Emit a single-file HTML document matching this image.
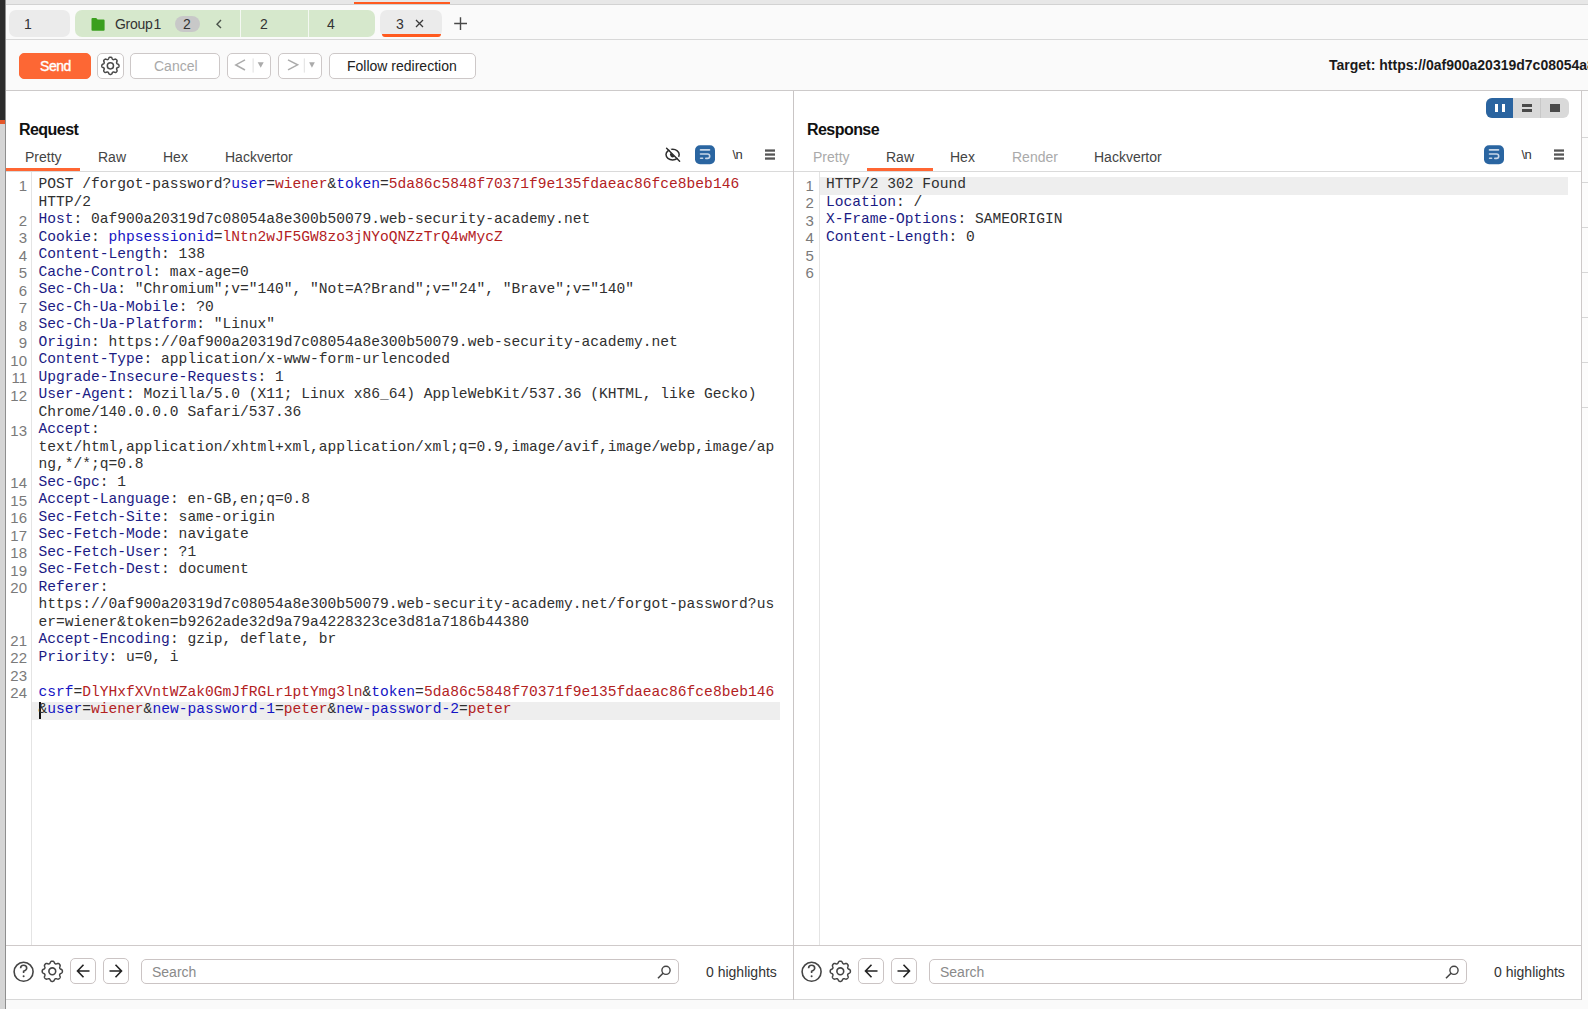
<!DOCTYPE html>
<html><head><meta charset="utf-8">
<style>
*{box-sizing:border-box;margin:0;padding:0}
html,body{width:1588px;height:1009px;overflow:hidden;background:#fafafa;font-family:"Liberation Sans",sans-serif;color:#2b2b2b}
.a{position:absolute}
svg{position:absolute;overflow:visible}
.t{position:absolute;white-space:pre;line-height:1}
/* chrome */
#topband{left:0;top:0;width:1588px;height:5px;background:#e7e7e7;border-bottom:1px solid #d2d2d2}
#toporange{left:354px;top:2px;width:96px;height:2px;background:#ff5a1f}
#tabbar{left:0;top:5px;width:1588px;height:35px;background:#fafafa;border-bottom:1px solid #d8d8d8}
#toolbar{left:0;top:40px;width:1588px;height:51px;background:#fafafa;border-bottom:1px solid #cdcaca}
#leftstrip{left:0;top:0;width:5px;height:1009px;background:#d5d5d5}
#leftdark{left:0;top:0;width:5px;height:120px;background:#2c2c2c}
#leftorange{left:0;top:120px;width:5px;height:4px;background:#e4572a}
#leftedge{left:5px;top:0;width:1px;height:1009px;background:#8e8e8e}
.tab{position:absolute;top:10px;height:27px;border-radius:7px;background:#ebebeb}
.tl{font-size:14px;color:#333;top:16.5px}
.btn{position:absolute;top:53px;height:26px;border:1px solid #cdc8c8;border-radius:5px;background:#fff}
/* panels */
.panel{position:absolute;top:91px;height:854px;background:#fff}
.ptitle{font-size:16px;font-weight:bold;color:#111;top:121.5px;letter-spacing:-0.55px}
.ptab{font-size:14px;color:#444;top:150px}
.ptab.dis{color:#aaa}
.mono{position:absolute;font-family:"Liberation Mono",monospace;font-size:14.6px;line-height:17.5px;white-space:pre;color:#303030}
.hn{color:#1b1b84}
.pn{color:#1414c4}
.pv{color:#b3221f}
.ln{position:absolute;font-family:"Liberation Sans",sans-serif;font-size:15px;line-height:17.5px;white-space:pre;color:#7a7a7a;text-align:right}
.foot{position:absolute;top:945px;height:55px;background:#fff}
.search{position:absolute;top:959px;height:25px;border:1px solid #cfcaca;border-radius:5px;background:#fff}
.stext{font-size:14px;color:#8a8a8a;top:965px}
.hl{font-size:14px;color:#333;top:965px}
</style></head><body>
<div class="a" id="topband"></div>
<div class="a" id="toporange"></div>
<div class="a" id="tabbar"></div>
<div class="a" id="toolbar"></div>

<!-- tabs -->
<div class="tab" style="left:9px;width:61px"></div>
<div class="t tl" style="left:24px">1</div>
<div class="tab" style="left:75px;width:300px;background:#d6e8cc"></div>
<div class="a" style="left:240px;top:10px;width:1px;height:27px;background:#f4f8f2"></div>
<div class="a" style="left:308px;top:10px;width:1px;height:27px;background:#f4f8f2"></div>
<svg style="left:91px;top:18px" width="14" height="13" viewBox="0 0 14 13"><path d="M0.5 1 Q0.5 0 1.5 0 H5.2 L6.6 1.6 H12.6 Q13.6 1.6 13.6 2.6 V12 Q13.6 12.8 12.6 12.8 H1.5 Q0.5 12.8 0.5 12 Z" fill="#3a9f1e"/></svg>
<div class="t tl" style="left:115px;letter-spacing:-0.3px">Group<span style="margin-left:1px">1</span></div>
<div class="a" style="left:175px;top:16px;width:25px;height:16px;border-radius:8px;background:#c8c8c8"></div>
<div class="t tl" style="left:183px">2</div>
<svg style="left:215px;top:19px" width="8" height="10" viewBox="0 0 8 10"><path d="M6 1 L2 5.2 L6 9" fill="none" stroke="#4a524a" stroke-width="1.4"/></svg>
<div class="t tl" style="left:260px">2</div>
<div class="t tl" style="left:327px">4</div>
<div class="tab" style="left:380px;width:62px"></div>
<div class="a" style="left:382px;top:34px;width:59px;height:3px;background:#ff5a1f;border-radius:0 0 3px 3px"></div>
<div class="t tl" style="left:396px">3</div>
<svg style="left:415px;top:19px" width="9" height="9" viewBox="0 0 9 9"><path d="M1 1 L8 8 M8 1 L1 8" stroke="#3a3a3a" stroke-width="1.3"/></svg>
<svg style="left:454px;top:17px" width="14" height="14" viewBox="0 0 14 14"><path d="M6.5 0.3 V13 M0.2 6.5 H13" stroke="#484848" stroke-width="1.4"/></svg>

<!-- toolbar -->
<div class="btn" style="left:19px;width:72px;background:#fd6734;border-color:#fd6734"></div>
<div class="t" style="left:40px;top:58.5px;font-size:14px;color:#fff;letter-spacing:-0.45px;-webkit-text-stroke:0.35px #fff">Send</div>
<div class="btn" style="left:97px;width:27px"></div>
<svg style="left:97px;top:53px" width="27" height="26" viewBox="0 0 27 26"><path d="M13.40 4.20 L13.74 4.22 L14.07 4.28 L14.39 4.40 L14.69 4.63 L14.95 5.01 L15.15 5.49 L15.34 5.91 L15.54 6.21 L15.76 6.40 L16.00 6.53 L16.26 6.61 L16.55 6.63 L16.90 6.56 L17.33 6.39 L17.81 6.20 L18.26 6.11 L18.64 6.16 L18.95 6.30 L19.23 6.49 L19.48 6.72 L19.71 6.97 L19.90 7.25 L20.04 7.56 L20.09 7.94 L20.00 8.39 L19.81 8.87 L19.64 9.30 L19.57 9.65 L19.59 9.94 L19.67 10.20 L19.80 10.44 L19.99 10.66 L20.29 10.86 L20.71 11.05 L21.19 11.25 L21.57 11.51 L21.80 11.81 L21.92 12.13 L21.98 12.46 L22.00 12.80 L21.98 13.14 L21.92 13.47 L21.80 13.79 L21.57 14.09 L21.19 14.35 L20.71 14.55 L20.29 14.74 L19.99 14.94 L19.80 15.16 L19.67 15.40 L19.59 15.66 L19.57 15.95 L19.64 16.30 L19.81 16.73 L20.00 17.21 L20.09 17.66 L20.04 18.04 L19.90 18.35 L19.71 18.63 L19.48 18.88 L19.23 19.11 L18.95 19.30 L18.64 19.44 L18.26 19.49 L17.81 19.40 L17.33 19.21 L16.90 19.04 L16.55 18.97 L16.26 18.99 L16.00 19.07 L15.76 19.20 L15.54 19.39 L15.34 19.69 L15.15 20.11 L14.95 20.59 L14.69 20.97 L14.39 21.20 L14.07 21.32 L13.74 21.38 L13.40 21.40 L13.06 21.38 L12.73 21.32 L12.41 21.20 L12.11 20.97 L11.85 20.59 L11.65 20.11 L11.46 19.69 L11.26 19.39 L11.04 19.20 L10.80 19.07 L10.54 18.99 L10.25 18.97 L9.90 19.04 L9.47 19.21 L8.99 19.40 L8.54 19.49 L8.16 19.44 L7.85 19.30 L7.57 19.11 L7.32 18.88 L7.09 18.63 L6.90 18.35 L6.76 18.04 L6.71 17.66 L6.80 17.21 L6.99 16.73 L7.16 16.30 L7.23 15.95 L7.21 15.66 L7.13 15.40 L7.00 15.16 L6.81 14.94 L6.51 14.74 L6.09 14.55 L5.61 14.35 L5.23 14.09 L5.00 13.79 L4.88 13.47 L4.82 13.14 L4.80 12.80 L4.82 12.46 L4.88 12.13 L5.00 11.81 L5.23 11.51 L5.61 11.25 L6.09 11.05 L6.51 10.86 L6.81 10.66 L7.00 10.44 L7.13 10.20 L7.21 9.94 L7.23 9.65 L7.16 9.30 L6.99 8.87 L6.80 8.39 L6.71 7.94 L6.76 7.56 L6.90 7.25 L7.09 6.97 L7.32 6.72 L7.57 6.49 L7.85 6.30 L8.16 6.16 L8.54 6.11 L8.99 6.20 L9.47 6.39 L9.90 6.56 L10.25 6.63 L10.54 6.61 L10.80 6.53 L11.04 6.40 L11.26 6.21 L11.46 5.91 L11.65 5.49 L11.85 5.01 L12.11 4.63 L12.41 4.40 L12.73 4.28 L13.06 4.22Z" fill="none" stroke="#4a4a4a" stroke-width="1.5"/><circle cx="13.4" cy="12.8" r="3.1" fill="none" stroke="#4a4a4a" stroke-width="1.5"/></svg>
<div class="btn" style="left:130px;width:90px"></div>
<div class="t" style="left:154px;top:59px;font-size:14px;color:#a9a9a9">Cancel</div>
<div class="btn" style="left:227px;width:44px"></div>
<svg style="left:234px;top:58px" width="32" height="16" viewBox="0 0 32 16"><path d="M11 1.8 L1.8 6.9 L11 12" fill="none" stroke="#ababab" stroke-width="1.5"/><path d="M19.1 0.4 V14.6" stroke="#e0e0e0" stroke-width="1"/><path d="M23.7 4.3 H29.7 L26.7 9.7 Z" fill="#ababab"/></svg>
<div class="btn" style="left:278px;width:44px"></div>
<svg style="left:285px;top:58px" width="32" height="16" viewBox="0 0 32 16"><path d="M3 1.8 L12.6 6.8 L3 11.9" fill="none" stroke="#ababab" stroke-width="1.5"/><path d="M19.3 0.4 V14.6" stroke="#e0e0e0" stroke-width="1"/><path d="M24.1 4.3 H29.8 L26.95 9.7 Z" fill="#ababab"/></svg>
<div class="btn" style="left:329px;width:147px"></div>
<div class="t" style="left:347px;top:59px;font-size:14px;color:#222">Follow redirection</div>
<div class="t" style="left:1329px;top:58px;font-size:14px;color:#1a1a1a;font-weight:bold">Target: https://0af900a20319d7c08054a8e300b50079.web-security-academy.net</div>

<!-- left panel -->
<div class="panel" style="left:6px;width:787px"></div>
<div class="a" style="left:793px;top:91px;width:1px;height:909px;background:#c9c5c5"></div>
<div class="t ptitle" style="left:19px">Request</div>
<div class="t ptab" style="left:25px">Pretty</div>
<div class="t ptab" style="left:98px">Raw</div>
<div class="t ptab" style="left:163px">Hex</div>
<div class="t ptab" style="left:225px">Hackvertor</div>
<div class="a" style="left:6px;top:171px;width:787px;height:1px;background:#dadada"></div>
<div class="a" style="left:6px;top:168px;width:74px;height:3px;background:#ff6633"></div>
<div class="a" style="left:31px;top:172px;width:1px;height:773px;background:#e4e4e4"></div>
<div class="a" style="left:32px;top:702px;width:748px;height:17.5px;background:#eeeeee"></div>
<div class="a" style="left:39px;top:702px;width:2px;height:17px;background:#111"></div>
<div class="mono" style="left:38.5px;top:176.4px">POST /forgot-password?<span class="pn">user</span>=<span class="pv">wiener</span>&amp;<span class="pn">token</span>=<span class="pv">5da86c5848f70371f9e135fdaeac86fce8beb146</span>
HTTP/2
<span class="hn">Host</span>: 0af900a20319d7c08054a8e300b50079.web-security-academy.net
<span class="hn">Cookie</span>: <span class="pn">phpsessionid</span>=<span class="pv">lNtn2wJF5GW8zo3jNYoQNZzTrQ4wMycZ</span>
<span class="hn">Content-Length</span>: 138
<span class="hn">Cache-Control</span>: max-age=0
<span class="hn">Sec-Ch-Ua</span>: "Chromium";v="140", "Not=A?Brand";v="24", "Brave";v="140"
<span class="hn">Sec-Ch-Ua-Mobile</span>: ?0
<span class="hn">Sec-Ch-Ua-Platform</span>: "Linux"
<span class="hn">Origin</span>: https://0af900a20319d7c08054a8e300b50079.web-security-academy.net
<span class="hn">Content-Type</span>: application/x-www-form-urlencoded
<span class="hn">Upgrade-Insecure-Requests</span>: 1
<span class="hn">User-Agent</span>: Mozilla/5.0 (X11; Linux x86_64) AppleWebKit/537.36 (KHTML, like Gecko)
Chrome/140.0.0.0 Safari/537.36
<span class="hn">Accept</span>:
text/html,application/xhtml+xml,application/xml;q=0.9,image/avif,image/webp,image/ap
ng,*/*;q=0.8
<span class="hn">Sec-Gpc</span>: 1
<span class="hn">Accept-Language</span>: en-GB,en;q=0.8
<span class="hn">Sec-Fetch-Site</span>: same-origin
<span class="hn">Sec-Fetch-Mode</span>: navigate
<span class="hn">Sec-Fetch-User</span>: ?1
<span class="hn">Sec-Fetch-Dest</span>: document
<span class="hn">Referer</span>:
https://0af900a20319d7c08054a8e300b50079.web-security-academy.net/forgot-password?us
er=wiener&amp;token=b9262ade32d9a79a4228323ce3d81a7186b44380
<span class="hn">Accept-Encoding</span>: gzip, deflate, br
<span class="hn">Priority</span>: u=0, i

<span class="pn">csrf</span>=<span class="pv">DlYHxfXVntWZak0GmJfRGLr1ptYmg3ln</span>&amp;<span class="pn">token</span>=<span class="pv">5da86c5848f70371f9e135fdaeac86fce8beb146</span>
&amp;<span class="pn">user</span>=<span class="pv">wiener</span>&amp;<span class="pn">new-password-1</span>=<span class="pv">peter</span>&amp;<span class="pn">new-password-2</span>=<span class="pv">peter</span></div>
<div class="ln" style="left:0px;width:27px;top:176.7px">1
 
2
3
4
5
6
7
8
9
10
11
12
 
13
 
 
14
15
16
17
18
19
20
 
 
21
22
23
24
 </div>

<!-- right panel -->
<div class="panel" style="left:794px;width:787px"></div>
<div class="a" style="left:1581px;top:91px;width:2px;height:909px;background:#cdc9c9"></div>
<div class="a" style="left:1582px;top:91px;width:6px;height:909px;background:#fcfcfc"></div><div class="a" style="left:1582px;top:137px;width:6px;height:1px;background:#d6d6d6"></div><div class="a" style="left:1582px;top:182px;width:6px;height:1px;background:#d6d6d6"></div><div class="a" style="left:1582px;top:227px;width:6px;height:1px;background:#d6d6d6"></div><div class="a" style="left:1582px;top:272px;width:6px;height:1px;background:#d6d6d6"></div><div class="a" style="left:1582px;top:317px;width:6px;height:1px;background:#d6d6d6"></div><div class="a" style="left:1582px;top:362px;width:6px;height:1px;background:#d6d6d6"></div><div class="a" style="left:1582px;top:407px;width:6px;height:1px;background:#d6d6d6"></div>
<div class="t ptitle" style="left:807px">Response</div>
<div class="t ptab dis" style="left:813px">Pretty</div>
<div class="t ptab" style="left:886px">Raw</div>
<div class="t ptab" style="left:950px">Hex</div>
<div class="t ptab dis" style="left:1012px">Render</div>
<div class="t ptab" style="left:1094px">Hackvertor</div>
<div class="a" style="left:794px;top:171px;width:787px;height:1px;background:#dadada"></div>
<div class="a" style="left:867px;top:168px;width:66px;height:3px;background:#ff6633"></div>
<div class="a" style="left:819px;top:172px;width:1px;height:773px;background:#e4e4e4"></div>
<div class="a" style="left:820px;top:177px;width:748px;height:17.5px;background:#eeeeee"></div>
<div class="mono" style="left:826px;top:176.4px">HTTP/2 302 Found
<span class="hn">Location</span>: /
<span class="hn">X-Frame-Options</span>: SAMEORIGIN
<span class="hn">Content-Length</span>: 0

</div>
<div class="ln" style="left:786.8px;width:27px;top:176.7px">1
2
3
4
5
6</div>


<!-- editor icons -->
<svg style="left:655px;top:140px" width="130" height="30" viewBox="0 0 130 30"><g transform="translate(665.3,0) translate(-655,0)"><ellipse cx="7.3" cy="14.6" rx="6.6" ry="5.3" fill="none" stroke="#2e2e2e" stroke-width="1.5"/>
<path d="M5.45 12.75 A2.6 2.6 0 0 0 9.15 16.45 Z" fill="#2e2e2e"/>
<path d="M2.6 7.2 L15.6 20.2" stroke="#fff" stroke-width="1.6"/>
<path d="M1.3 8.2 L14.3 21.3" stroke="#2e2e2e" stroke-width="1.5" stroke-linecap="round"/></g><rect x="40" y="5.2" width="20" height="19" rx="5" fill="#2a65a1"/>
<path d="M45.5 9.9 H54.5" stroke="#c9d7e8" stroke-width="1.6" stroke-linecap="round"/>
<path d="M45.5 14 H52.5 A2.2 2.2 0 0 1 52.5 18.4 H50.8" fill="none" stroke="#c9d7e8" stroke-width="1.6" stroke-linecap="round"/>
<path d="M45.6 18.2 H47.6" stroke="#c9d7e8" stroke-width="1.6" stroke-linecap="round"/>
<rect x="110" y="9.4" width="10" height="2.3" fill="#555"/>
<rect x="110" y="13.4" width="10" height="2.3" fill="#555"/>
<rect x="110" y="17.4" width="10" height="2.3" fill="#555"/>
</svg><div class="t" style="left:732.5px;top:147.5px;font-size:13px;color:#333;letter-spacing:-0.5px">\n</div>
<svg style="left:1444px;top:140px" width="130" height="30" viewBox="0 0 130 30"><rect x="40" y="5.2" width="20" height="19" rx="5" fill="#2a65a1"/>
<path d="M45.5 9.9 H54.5" stroke="#c9d7e8" stroke-width="1.6" stroke-linecap="round"/>
<path d="M45.5 14 H52.5 A2.2 2.2 0 0 1 52.5 18.4 H50.8" fill="none" stroke="#c9d7e8" stroke-width="1.6" stroke-linecap="round"/>
<path d="M45.6 18.2 H47.6" stroke="#c9d7e8" stroke-width="1.6" stroke-linecap="round"/>
<rect x="110" y="9.4" width="10" height="2.3" fill="#555"/>
<rect x="110" y="13.4" width="10" height="2.3" fill="#555"/>
<rect x="110" y="17.4" width="10" height="2.3" fill="#555"/>
</svg><div class="t" style="left:1521.5px;top:147.5px;font-size:13px;color:#333;letter-spacing:-0.5px">\n</div>
<!-- layout switch -->
<div class="a" style="left:1486px;top:98px;width:83px;height:20px;border-radius:6px;background:#d9d9d9;overflow:hidden">
 <div class="a" style="left:0;top:0;width:27px;height:20px;background:#2a64a0"></div>
 <div class="a" style="left:54px;top:0;width:1px;height:20px;background:#c8c8c8"></div>
 <div class="a" style="left:9px;top:5.5px;width:3.3px;height:8.2px;background:#fff"></div>
 <div class="a" style="left:15.6px;top:5.5px;width:3.3px;height:8.2px;background:#fff"></div>
 <div class="a" style="left:36.4px;top:5.8px;width:10px;height:2.8px;background:#4a4a4a"></div>
 <div class="a" style="left:36.4px;top:11.3px;width:10px;height:2.6px;background:#4a4a4a"></div>
 <div class="a" style="left:64px;top:5.5px;width:10px;height:8.2px;background:#4a4a4a"></div>
</div>

<!-- footers -->
<div class="foot" style="left:6px;width:787px;border-top:1px solid #cfcaca;border-bottom:1px solid #d8d8d8"></div>
<div class="foot" style="left:794px;width:787px;border-top:1px solid #cfcaca;border-bottom:1px solid #d8d8d8"></div>


<!-- footer left -->
<svg style="left:6px;top:945px" width="787" height="55" viewBox="0 0 787 55">
<circle cx="17.6" cy="26.8" r="9.5" fill="none" stroke="#454545" stroke-width="1.6"/>
<path d="M14.600000000000001 23.2 Q14.600000000000001 20.3 17.6 20.3 Q20.7 20.3 20.7 23.2 Q20.7 25 17.6 26.2 V28" fill="none" stroke="#454545" stroke-width="1.6"/>
<circle cx="17.6" cy="31.2" r="1" fill="#454545"/>
<path d="M46.30 16.20 L46.70 16.22 L47.09 16.28 L47.47 16.42 L47.82 16.68 L48.13 17.11 L48.38 17.64 L48.61 18.11 L48.85 18.44 L49.12 18.66 L49.40 18.81 L49.71 18.91 L50.05 18.94 L50.46 18.88 L50.95 18.70 L51.51 18.51 L52.02 18.42 L52.46 18.49 L52.82 18.66 L53.15 18.89 L53.44 19.16 L53.71 19.45 L53.94 19.78 L54.11 20.14 L54.18 20.58 L54.09 21.09 L53.90 21.65 L53.72 22.14 L53.66 22.55 L53.69 22.89 L53.79 23.20 L53.94 23.48 L54.16 23.75 L54.49 23.99 L54.96 24.22 L55.49 24.47 L55.92 24.78 L56.18 25.13 L56.32 25.51 L56.38 25.90 L56.40 26.30 L56.38 26.70 L56.32 27.09 L56.18 27.47 L55.92 27.82 L55.49 28.13 L54.96 28.38 L54.49 28.61 L54.16 28.85 L53.94 29.12 L53.79 29.40 L53.69 29.71 L53.66 30.05 L53.72 30.46 L53.90 30.95 L54.09 31.51 L54.18 32.02 L54.11 32.46 L53.94 32.82 L53.71 33.15 L53.44 33.44 L53.15 33.71 L52.82 33.94 L52.46 34.11 L52.02 34.18 L51.51 34.09 L50.95 33.90 L50.46 33.72 L50.05 33.66 L49.71 33.69 L49.40 33.79 L49.12 33.94 L48.85 34.16 L48.61 34.49 L48.38 34.96 L48.13 35.49 L47.82 35.92 L47.47 36.18 L47.09 36.32 L46.70 36.38 L46.30 36.40 L45.90 36.38 L45.51 36.32 L45.13 36.18 L44.78 35.92 L44.47 35.49 L44.22 34.96 L43.99 34.49 L43.75 34.16 L43.48 33.94 L43.20 33.79 L42.89 33.69 L42.55 33.66 L42.14 33.72 L41.65 33.90 L41.09 34.09 L40.58 34.18 L40.14 34.11 L39.78 33.94 L39.45 33.71 L39.16 33.44 L38.89 33.15 L38.66 32.82 L38.49 32.46 L38.42 32.02 L38.51 31.51 L38.70 30.95 L38.88 30.46 L38.94 30.05 L38.91 29.71 L38.81 29.40 L38.66 29.12 L38.44 28.85 L38.11 28.61 L37.64 28.38 L37.11 28.13 L36.68 27.82 L36.42 27.47 L36.28 27.09 L36.22 26.70 L36.20 26.30 L36.22 25.90 L36.28 25.51 L36.42 25.13 L36.68 24.78 L37.11 24.47 L37.64 24.22 L38.11 23.99 L38.44 23.75 L38.66 23.48 L38.81 23.20 L38.91 22.89 L38.94 22.55 L38.88 22.14 L38.70 21.65 L38.51 21.09 L38.42 20.58 L38.49 20.14 L38.66 19.78 L38.89 19.45 L39.16 19.16 L39.45 18.89 L39.78 18.66 L40.14 18.49 L40.58 18.42 L41.09 18.51 L41.65 18.70 L42.14 18.88 L42.55 18.94 L42.89 18.91 L43.20 18.81 L43.48 18.66 L43.75 18.44 L43.99 18.11 L44.22 17.64 L44.47 17.11 L44.78 16.68 L45.13 16.42 L45.51 16.28 L45.90 16.22Z" fill="none" stroke="#454545" stroke-width="1.5"/>
<circle cx="46.3" cy="26.3" r="3.4" fill="none" stroke="#454545" stroke-width="1.6"/>
<rect x="64.5" y="13.5" width="25" height="25" rx="4.5" fill="#fff" stroke="#cbc4c4" stroke-width="1"/>
<path d="M77.5 19.8 L71.5 26 L77.5 32.2 M71.5 26 H83.5" fill="none" stroke="#222" stroke-width="1.6"/>
<rect x="97.5" y="13.5" width="25" height="25" rx="4.5" fill="#fff" stroke="#cbc4c4" stroke-width="1"/>
<path d="M109.5 19.8 L115.5 26 L109.5 32.2 M103.5 26 H115.5" fill="none" stroke="#222" stroke-width="1.6"/>
<rect x="135.5" y="14.5" width="537" height="24" rx="4.5" fill="#fff" stroke="#cbc4c4" stroke-width="1"/>
<circle cx="660" cy="25.3" r="4.1" fill="none" stroke="#444" stroke-width="1.4"/>
<path d="M657 28.3 L652 33.2" stroke="#444" stroke-width="1.6"/>
</svg>
<div class="t stext" style="left:152px">Search</div>
<div class="t hl" style="left:706px">0 highlights</div>
<!-- footer right -->
<svg style="left:794px;top:945px" width="787" height="55" viewBox="0 0 787 55">
<circle cx="17.6" cy="26.8" r="9.5" fill="none" stroke="#454545" stroke-width="1.6"/>
<path d="M14.600000000000001 23.2 Q14.600000000000001 20.3 17.6 20.3 Q20.7 20.3 20.7 23.2 Q20.7 25 17.6 26.2 V28" fill="none" stroke="#454545" stroke-width="1.6"/>
<circle cx="17.6" cy="31.2" r="1" fill="#454545"/>
<path d="M46.30 16.20 L46.70 16.22 L47.09 16.28 L47.47 16.42 L47.82 16.68 L48.13 17.11 L48.38 17.64 L48.61 18.11 L48.85 18.44 L49.12 18.66 L49.40 18.81 L49.71 18.91 L50.05 18.94 L50.46 18.88 L50.95 18.70 L51.51 18.51 L52.02 18.42 L52.46 18.49 L52.82 18.66 L53.15 18.89 L53.44 19.16 L53.71 19.45 L53.94 19.78 L54.11 20.14 L54.18 20.58 L54.09 21.09 L53.90 21.65 L53.72 22.14 L53.66 22.55 L53.69 22.89 L53.79 23.20 L53.94 23.48 L54.16 23.75 L54.49 23.99 L54.96 24.22 L55.49 24.47 L55.92 24.78 L56.18 25.13 L56.32 25.51 L56.38 25.90 L56.40 26.30 L56.38 26.70 L56.32 27.09 L56.18 27.47 L55.92 27.82 L55.49 28.13 L54.96 28.38 L54.49 28.61 L54.16 28.85 L53.94 29.12 L53.79 29.40 L53.69 29.71 L53.66 30.05 L53.72 30.46 L53.90 30.95 L54.09 31.51 L54.18 32.02 L54.11 32.46 L53.94 32.82 L53.71 33.15 L53.44 33.44 L53.15 33.71 L52.82 33.94 L52.46 34.11 L52.02 34.18 L51.51 34.09 L50.95 33.90 L50.46 33.72 L50.05 33.66 L49.71 33.69 L49.40 33.79 L49.12 33.94 L48.85 34.16 L48.61 34.49 L48.38 34.96 L48.13 35.49 L47.82 35.92 L47.47 36.18 L47.09 36.32 L46.70 36.38 L46.30 36.40 L45.90 36.38 L45.51 36.32 L45.13 36.18 L44.78 35.92 L44.47 35.49 L44.22 34.96 L43.99 34.49 L43.75 34.16 L43.48 33.94 L43.20 33.79 L42.89 33.69 L42.55 33.66 L42.14 33.72 L41.65 33.90 L41.09 34.09 L40.58 34.18 L40.14 34.11 L39.78 33.94 L39.45 33.71 L39.16 33.44 L38.89 33.15 L38.66 32.82 L38.49 32.46 L38.42 32.02 L38.51 31.51 L38.70 30.95 L38.88 30.46 L38.94 30.05 L38.91 29.71 L38.81 29.40 L38.66 29.12 L38.44 28.85 L38.11 28.61 L37.64 28.38 L37.11 28.13 L36.68 27.82 L36.42 27.47 L36.28 27.09 L36.22 26.70 L36.20 26.30 L36.22 25.90 L36.28 25.51 L36.42 25.13 L36.68 24.78 L37.11 24.47 L37.64 24.22 L38.11 23.99 L38.44 23.75 L38.66 23.48 L38.81 23.20 L38.91 22.89 L38.94 22.55 L38.88 22.14 L38.70 21.65 L38.51 21.09 L38.42 20.58 L38.49 20.14 L38.66 19.78 L38.89 19.45 L39.16 19.16 L39.45 18.89 L39.78 18.66 L40.14 18.49 L40.58 18.42 L41.09 18.51 L41.65 18.70 L42.14 18.88 L42.55 18.94 L42.89 18.91 L43.20 18.81 L43.48 18.66 L43.75 18.44 L43.99 18.11 L44.22 17.64 L44.47 17.11 L44.78 16.68 L45.13 16.42 L45.51 16.28 L45.90 16.22Z" fill="none" stroke="#454545" stroke-width="1.5"/>
<circle cx="46.3" cy="26.3" r="3.4" fill="none" stroke="#454545" stroke-width="1.6"/>
<rect x="64.5" y="13.5" width="25" height="25" rx="4.5" fill="#fff" stroke="#cbc4c4" stroke-width="1"/>
<path d="M77.5 19.8 L71.5 26 L77.5 32.2 M71.5 26 H83.5" fill="none" stroke="#222" stroke-width="1.6"/>
<rect x="97.5" y="13.5" width="25" height="25" rx="4.5" fill="#fff" stroke="#cbc4c4" stroke-width="1"/>
<path d="M109.5 19.8 L115.5 26 L109.5 32.2 M103.5 26 H115.5" fill="none" stroke="#222" stroke-width="1.6"/>
<rect x="135.5" y="14.5" width="537" height="24" rx="4.5" fill="#fff" stroke="#cbc4c4" stroke-width="1"/>
<circle cx="660" cy="25.3" r="4.1" fill="none" stroke="#444" stroke-width="1.4"/>
<path d="M657 28.3 L652 33.2" stroke="#444" stroke-width="1.6"/>
</svg>
<div class="t stext" style="left:940px">Search</div>
<div class="t hl" style="left:1494px">0 highlights</div>

<div class="a" id="leftstrip"></div>
<div class="a" id="leftdark"></div>
<div class="a" id="leftorange"></div>
<div class="a" id="leftedge"></div>
</body></html>
